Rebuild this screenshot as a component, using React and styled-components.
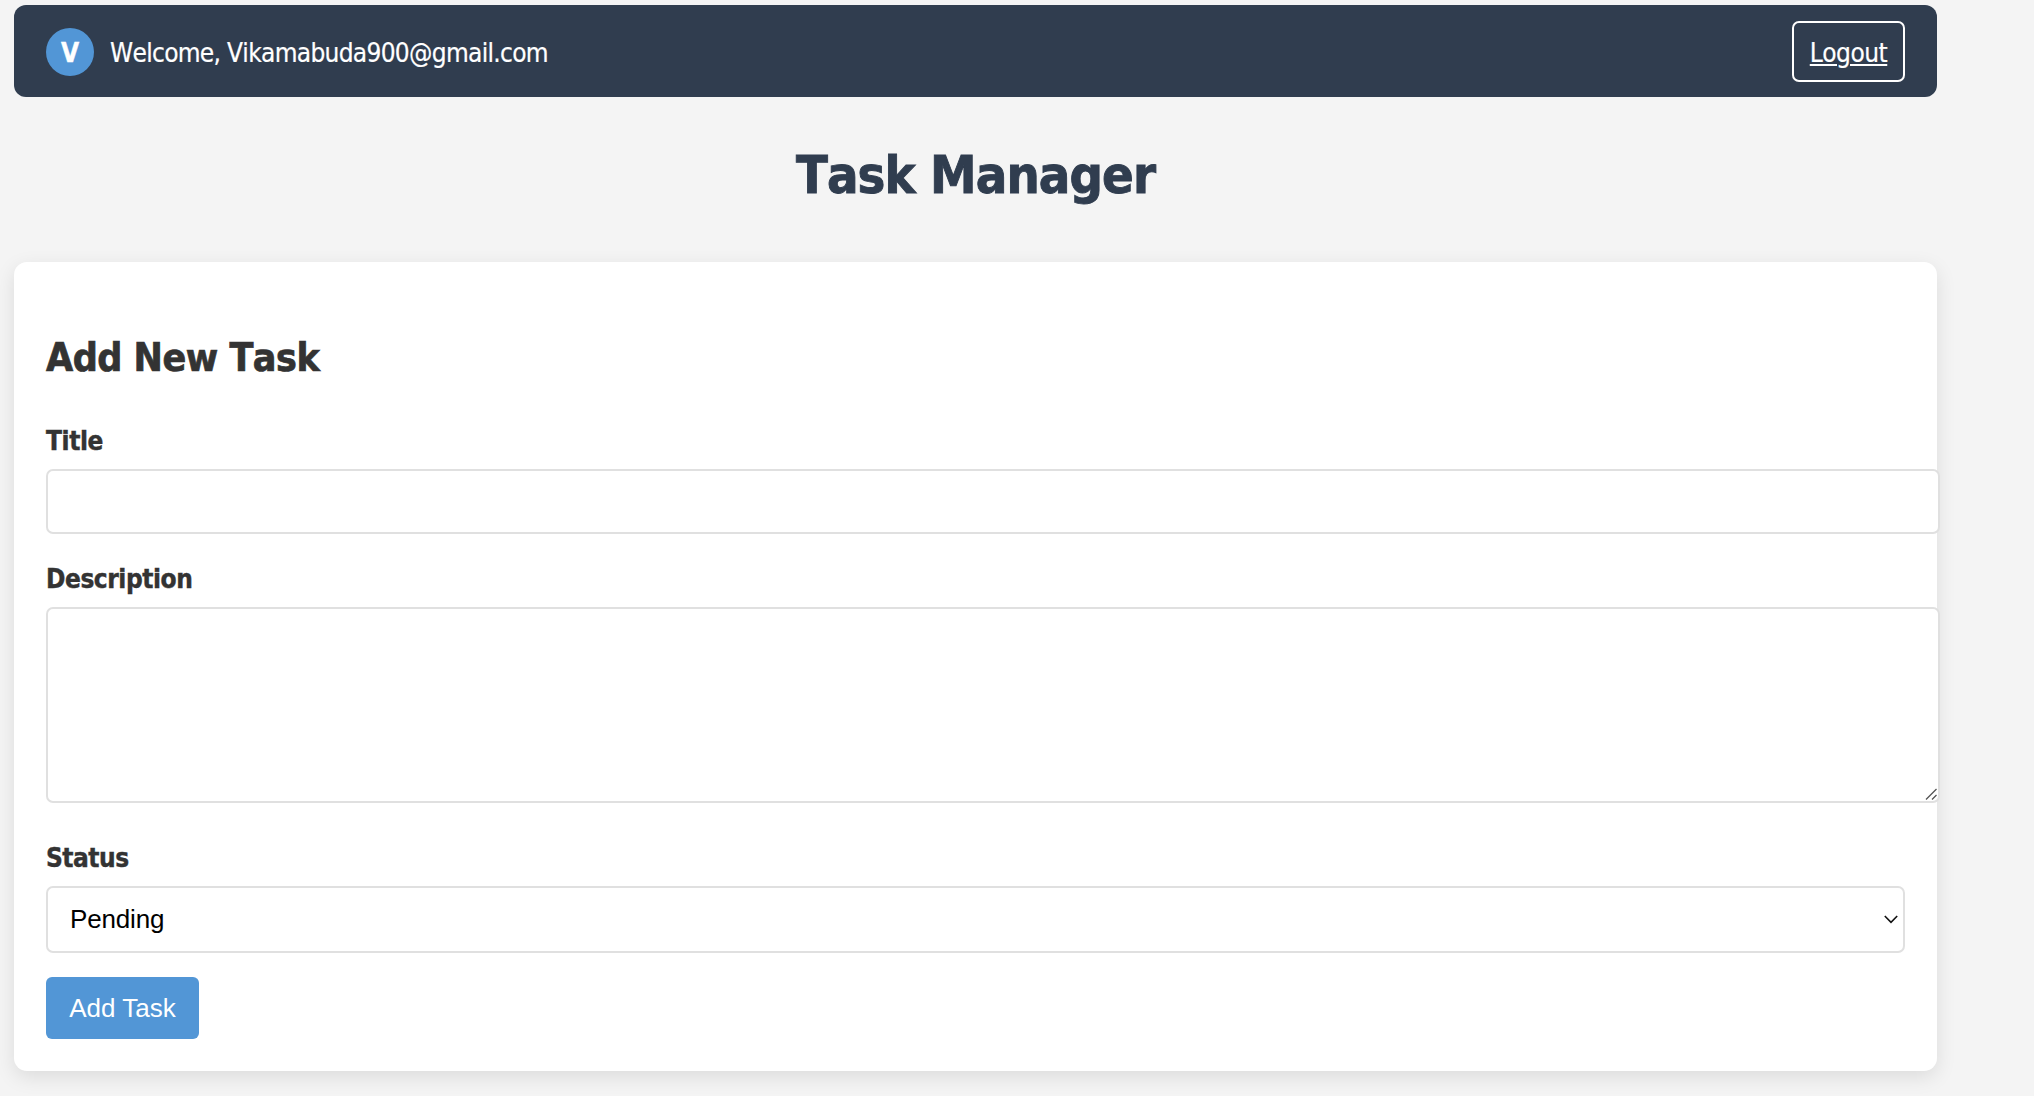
import React from "react";
import styled, { createGlobalStyle } from "styled-components";

const GlobalStyle = createGlobalStyle`
  *, *::before, *::after { box-sizing: border-box; }
  html { background: #f4f4f4; }
  body {
    margin: 0;
    color: #333;
    font-family: "DejaVu Sans Condensed", "DejaVu Sans", Tahoma, sans-serif;
    font-size: 26px;
    font-kerning: none;
  }
`;

const Page = styled.main`
  width: 1923px;
  min-height: 100vh;
  margin-left: 14px;
  padding-top: 5px;
`;

const Header = styled.header`
  display: flex;
  align-items: center;
  justify-content: space-between;
  height: 92px;
  padding: 1px 32px 0;
  border-radius: 12px;
  background: #303d4f;
  color: #fff;
`;

const User = styled.div`
  display: flex;
  align-items: center;
  gap: 16px;
  line-height: 32px;
`;

const Avatar = styled.span`
  display: flex;
  align-items: center;
  justify-content: center;
  width: 48px;
  height: 48px;
  padding-top: 2px;
  border-radius: 50%;
  background: #5296d6;
  font-weight: 700;
  -webkit-text-stroke: 0.4px currentColor;
`;

const Text = styled.span`
  letter-spacing: ${(p) => p.$spacing || 0}px;
`;

const Welcome = styled(Text)`
  padding-top: 2px;
  -webkit-text-stroke: 0.2px currentColor;
`;

const Logout = styled.a`
  display: flex;
  align-items: center;
  justify-content: center;
  width: 113px;
  height: 61px;
  padding-top: 2px;
  border: 2px solid #fff;
  border-radius: 7px;
  color: #fff;
  text-decoration: underline;
  text-decoration-thickness: 2px;
  text-underline-offset: 2px;
  -webkit-text-stroke: 0.2px currentColor;
`;

const PageTitle = styled.h1`
  margin: 46px 0 55px;
  font-size: 52px;
  line-height: 64px;
  text-align: center;
  color: #303d4f;
  -webkit-text-stroke: 0.9px currentColor;
`;

const Card = styled.form`
  display: flex;
  flex-direction: column;
  align-items: flex-start;
  height: 809px;
  padding: 72px 32px 0;
  border-radius: 13px;
  background: #fff;
  box-shadow: 0 6px 20px rgba(0, 0, 0, 0.1);
`;

const CardTitle = styled.h2`
  margin: 0 0 43px;
  font-size: 39px;
  line-height: 48px;
  -webkit-text-stroke: 0.7px currentColor;
`;

const Label = styled.label`
  display: block;
  margin-bottom: 12px;
  font-weight: 700;
  line-height: 32px;
  -webkit-text-stroke: 0.4px currentColor;
`;

const controlBase = `
  display: block;
  margin: 0;
  border: 2px solid #e0e0e0;
  border-radius: 7px;
  background: #fff;
  color: #000;
  font-family: "Liberation Sans", Arial, sans-serif;
  font-size: 26px;
  outline: none;
`;

const Input = styled.input`
  ${controlBase}
  width: 1894px;
  height: 65px;
  margin-bottom: 29px;
  padding: 0 22px;
`;

const AreaWrap = styled.div`
  position: relative;
  width: 1894px;
  height: 196px;
  margin-bottom: 39px;
`;

const Area = styled.textarea`
  ${controlBase}
  width: 100%;
  height: 100%;
  padding: 16px 22px;
  resize: none;
`;

const Grip = styled.svg`
  position: absolute;
  right: 2px;
  bottom: 2px;
`;

const Select = styled.button`
  ${controlBase}
  display: flex;
  align-items: center;
  justify-content: space-between;
  width: 1859px;
  height: 67px;
  margin-bottom: 24px;
  padding: 0 5px 0 22px;
`;

const Submit = styled.button`
  width: 153px;
  height: 62px;
  padding: 0;
  border: 0;
  border-radius: 6px;
  background: #5296d6;
  color: #fff;
  font-family: "Liberation Sans", Arial, sans-serif;
  font-size: 26px;
  font-kerning: normal;
`;

export default function App() {
  return (
    <>
      <GlobalStyle />
      <Page>
        <Header>
          <User>
            <Avatar>V</Avatar>
            <Welcome $spacing={-0.69}>Welcome, Vikamabuda900@gmail.com</Welcome>
          </User>
          <Logout>
            <Text $spacing={-0.5}>Logout</Text>
          </Logout>
        </Header>
        <PageTitle>
          <Text $spacing={-0.9}>Task Manager</Text>
        </PageTitle>
        <Card onSubmit={(e) => e.preventDefault()}>
          <CardTitle>
            <Text $spacing={-0.5}>Add New Task</Text>
          </CardTitle>
          <Label htmlFor="title">
            <Text $spacing={-0.4}>Title</Text>
          </Label>
          <Input id="title" />
          <Label htmlFor="description">
            <Text $spacing={-0.45}>Description</Text>
          </Label>
          <AreaWrap>
            <Area id="description" />
            <Grip width="13" height="13" viewBox="0 0 13 13" fill="none" stroke="#555" strokeWidth="1.3">
              <path d="M1 11.5 11.5 1M7 11.5 11.5 7" />
            </Grip>
          </AreaWrap>
          <Label htmlFor="status">
            <Text $spacing={-0.5}>Status</Text>
          </Label>
          <Select id="status" type="button">
            <Text $spacing={-0.15}>Pending</Text>
            <svg width="14" height="9" viewBox="0 0 14 9" fill="none" stroke="#111" strokeWidth="1.6">
              <path d="M.8 1 7 7.4 13.2 1" />
            </svg>
          </Select>
          <Submit type="submit">Add Task</Submit>
        </Card>
      </Page>
    </>
  );
}
